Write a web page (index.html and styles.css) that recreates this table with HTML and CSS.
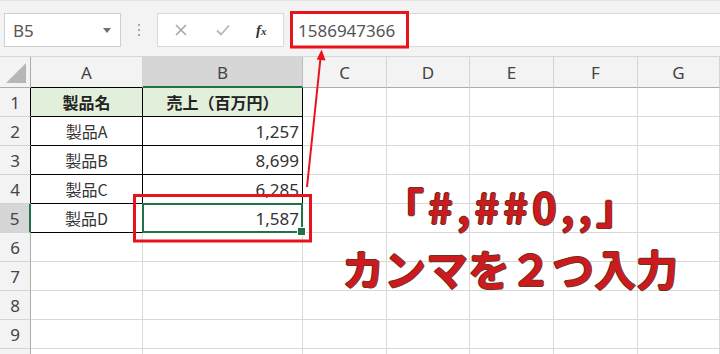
FILE: index.html
```html
<!DOCTYPE html>
<html lang="ja">
<head>
<meta charset="utf-8">
<link rel="stylesheet" href="styles.css">
</head>
<body>
<div class="app">
  <div class="toolbar">
    <div class="namebox"><span class="nb-text">B5</span><span class="caret"></span></div>
    <div class="dots"><i></i><i></i><i></i></div>
    <div class="fxbox">
      <svg class="ico" width="14" height="14" viewBox="0 0 14 14"><path d="M2 2L12 12M12 2L2 12" stroke="#a8a8a8" stroke-width="1.6" fill="none"/></svg>
      <svg class="ico" width="16" height="14" viewBox="0 0 16 14"><path d="M2 7.5L6 11.5L14 2.5" stroke="#b8b8b8" stroke-width="1.8" fill="none"/></svg>
      <span class="fx">f<span class="fx-x">x</span></span>
    </div>
    <div class="formula"><span class="fv">1586947366</span></div>
  </div>

  <div class="sheet">
    <div class="corner"><svg width="20" height="20" viewBox="0 0 20 20"><path d="M20 0L20 20L0 20Z" fill="#b6b6b6"/></svg></div>
    <div class="ch tb">A</div>
    <div class="ch sel">B</div>
    <div class="ch">C</div>
    <div class="ch">D</div>
    <div class="ch">E</div>
    <div class="ch">F</div>
    <div class="ch">G</div>

    <div class="rh tb">1</div>
    <div class="c t hd ctr">製品名</div>
    <div class="c t hd ctr">売上（百万円）</div>
    <div class="c"></div><div class="c"></div><div class="c"></div><div class="c"></div><div class="c"></div>

    <div class="rh tb">2</div>
    <div class="c t ctr">製品A</div>
    <div class="c t r">1,257</div>
    <div class="c"></div><div class="c"></div><div class="c"></div><div class="c"></div><div class="c"></div>

    <div class="rh tb">3</div>
    <div class="c t ctr">製品B</div>
    <div class="c t r">8,699</div>
    <div class="c"></div><div class="c"></div><div class="c"></div><div class="c"></div><div class="c"></div>

    <div class="rh tb">4</div>
    <div class="c t ctr">製品C</div>
    <div class="c t r">6,285</div>
    <div class="c"></div><div class="c"></div><div class="c"></div><div class="c"></div><div class="c"></div>

    <div class="rh sel">5</div>
    <div class="c t ctr">製品D</div>
    <div class="c t r active">1,587</div>
    <div class="c"></div><div class="c"></div><div class="c"></div><div class="c"></div><div class="c"></div>

    <div class="rh">6</div>
    <div class="c"></div><div class="c"></div><div class="c"></div><div class="c"></div><div class="c"></div><div class="c"></div><div class="c"></div>
    <div class="rh">7</div>
    <div class="c"></div><div class="c"></div><div class="c"></div><div class="c"></div><div class="c"></div><div class="c"></div><div class="c"></div>
    <div class="rh">8</div>
    <div class="c"></div><div class="c"></div><div class="c"></div><div class="c"></div><div class="c"></div><div class="c"></div><div class="c"></div>
    <div class="rh">9</div>
    <div class="c"></div><div class="c"></div><div class="c"></div><div class="c"></div><div class="c"></div><div class="c"></div><div class="c"></div>
    <div class="rh"></div>
    <div class="c"></div><div class="c"></div><div class="c"></div><div class="c"></div><div class="c"></div><div class="c"></div><div class="c"></div>
  </div>

  <div class="note">
    <div class="note-line l1">「#,##0,,」</div>
    <div class="note-line">カンマを２つ入力</div>
  </div>

  <svg class="marks" width="720" height="354" viewBox="0 0 720 354">
    <rect x="291.5" y="12.5" width="116" height="34.5" fill="none" stroke="#e8131b" stroke-width="3"/>
    <rect x="134.5" y="195.5" width="176" height="45.5" fill="none" stroke="#e8131b" stroke-width="3"/>
    <line x1="307" y1="187" x2="320.5" y2="58" stroke="#e8131b" stroke-width="2"/>
    <path d="M321.6 49.5L325.6 60.5L316.6 59.5Z" fill="#e8131b"/>
  </svg>
</div>
</body>
</html>
```

FILE: styles.css
```css
* { box-sizing: border-box; }
html, body { margin: 0; padding: 0; }
body {
  width: 720px;
  height: 354px;
  overflow: hidden;
  background: #ffffff;
  font-family: "Noto Sans CJK JP", "Noto Sans", sans-serif;
  color: #222;
}
.app {
  position: relative;
  width: 720px;
  height: 354px;
  overflow: hidden;
}

/* toolbar */
.toolbar {
  height: 57px;
  background: #f3f3f3;
  border-top: 1px solid #e2e2e2;
  border-bottom: 1px solid #d6d6d6;
  display: flex;
  align-items: flex-start;
  padding-top: 12px;
  padding-left: 4px;
}
.namebox {
  width: 117px;
  height: 34px;
  background: #fff;
  border: 1px solid #cfcfcf;
  display: flex;
  align-items: center;
  justify-content: space-between;
  padding: 0 9px 0 8px;
}
.nb-text {
  font-family: "Noto Sans", sans-serif;
  font-size: 17px;
  color: #555;
}
.caret {
  width: 0;
  height: 0;
  border-left: 4px solid transparent;
  border-right: 4px solid transparent;
  border-top: 5px solid #707070;
}
.dots {
  width: 36px;
  height: 34px;
  display: flex;
  flex-direction: column;
  align-items: center;
  justify-content: center;
  gap: 3px;
}
.dots i {
  display: block;
  width: 2px;
  height: 2px;
  background: #a8a8a8;
}
.fxbox {
  width: 127px;
  height: 34px;
  background: #fff;
  border: 1px solid #d8d8d8;
  display: flex;
  align-items: center;
  padding-left: 16px;
  gap: 27px;
}
.fxbox .ico { display: block; }
.fx {
  font-family: "Liberation Serif", serif;
  font-style: italic;
  font-weight: bold;
  font-size: 15px;
  color: #333;
  margin-left: -2px;
}
.fx-x { font-size: 11px; }
.formula {
  flex: 1;
  height: 34px;
  margin-left: 6px;
  background: #fff;
  border: 1px solid #d8d8d8;
  border-right: none;
  display: flex;
  align-items: center;
  padding-left: 7px;
}
.fv {
  font-family: "Noto Sans", sans-serif;
  font-size: 17px;
  color: #555;
}

/* sheet */
.sheet {
  display: grid;
  grid-template-columns: 31px 112px 160px 84px 83px 84px 84px 82px;
  grid-template-rows: 31px repeat(10, 29px);
  font-size: 16px;
}
.corner {
  background: #f3f3f3;
  border-right: 1px solid #ababab;
  border-bottom: 1px solid #ababab;
  display: flex;
  align-items: flex-end;
  justify-content: flex-end;
  padding: 0 4px 4px 0;
}
.corner svg { display: block; }
.ch {
  background: #f3f3f3;
  border-right: 1px solid #d4d4d4;
  border-bottom: 1px solid #ababab;
  display: flex;
  align-items: center;
  justify-content: center;
  font-family: "Noto Sans", sans-serif;
  font-size: 17px;
  color: #444;
  padding-top: 1px;
}
.ch.tb { border-bottom-color: #000; }
.ch.sel {
  background: #d6d6d6;
  border-bottom: 2px solid #217346;
  border-right-color: #bdbdbd;
}
.rh {
  background: #f3f3f3;
  border-right: 1px solid #ababab;
  border-bottom: 1px solid #d4d4d4;
  display: flex;
  align-items: center;
  justify-content: center;
  font-family: "Noto Sans", sans-serif;
  font-size: 17px;
  color: #444;
}
.rh.tb { border-right-color: #000; }
.rh.sel {
  background: #d6d6d6;
  border-right: 2px solid #217346;
}
.c {
  border-right: 1px solid #d9d9d9;
  border-bottom: 1px solid #d9d9d9;
  display: flex;
  align-items: center;
  color: #333;
  white-space: nowrap;
}
.c.t {
  border-right-color: #000;
  border-bottom-color: #000;
}
.c.hd {
  background: #e2efda;
  font-weight: bold;
  color: #222;
}
.c.ctr { justify-content: center; }
.c.r {
  justify-content: flex-end;
  padding-right: 3px;
  font-family: "Noto Sans", sans-serif;
  font-size: 17px;
}
.c.active { position: relative; }
.c.active::after {
  content: "";
  position: absolute;
  left: -1px;
  top: -1px;
  right: -1px;
  bottom: -1px;
  border: 2px solid #217346;
}
.c.active::before {
  content: "";
  position: absolute;
  right: -4px;
  bottom: -4px;
  width: 7px;
  height: 7px;
  background: #217346;
  border: 1px solid #fff;
  z-index: 1;
}

/* annotation */
.note {
  position: absolute;
  left: 310px;
  top: 175px;
  width: 400px;
  text-align: center;
  font-family: "Noto Sans CJK JP", sans-serif;
  font-weight: bold;
  font-size: 42px;
  line-height: 62px;
  color: #cc1a1f;
  text-shadow:
    1px 0 #6e3322, -1px 0 #6e3322, 0 1px #6e3322, 0 -1px #6e3322;
}
.note-line { white-space: nowrap; }
.note-line.l1 {
  letter-spacing: 4px;
  text-indent: 4px;
}
.marks {
  position: absolute;
  left: 0;
  top: 0;
  pointer-events: none;
}
```
